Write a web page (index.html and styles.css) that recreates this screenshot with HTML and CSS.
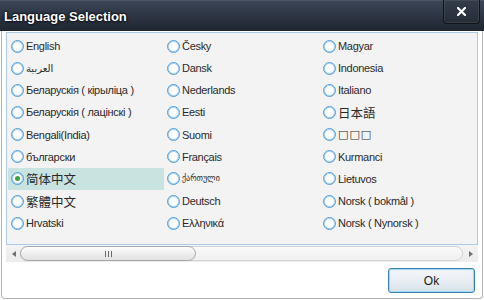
FILE: index.html
```html
<!DOCTYPE html>
<html lang="en">
<head>
  <meta charset="UTF-8">
  <title>Language Selection</title>
  <link rel="stylesheet" href="styles.css">
</head>
<body>
  <div class="dialog">
    <div class="titlebar">
      <span class="title">Language Selection</span>
      <button class="close-button">
        <svg width="9" height="9" viewBox="0 0 9 9"><path d="M1 1L8 8M8 1L1 8" stroke="#fff" stroke-width="2.2" stroke-linecap="square"/></svg>
      </button>
    </div>
    <div class="content">
      <div class="list">
        <!-- column 1 -->
        <label class="item"><span class="radio"></span>English</label>
        <label class="item"><span class="radio"></span><span class="arabic">العربية</span></label>
        <label class="item"><span class="radio"></span>Беларускія ( кірыліца )</label>
        <label class="item"><span class="radio"></span>Беларускія ( лацінскі )</label>
        <label class="item"><span class="radio"></span>Bengali(India)</label>
        <label class="item"><span class="radio"></span>български</label>
        <label class="item selected"><span class="radio"></span><span class="cjk">简体中文</span></label>
        <label class="item"><span class="radio"></span><span class="cjk">繁體中文</span></label>
        <label class="item"><span class="radio"></span>Hrvatski</label>
        <!-- column 2 -->
        <label class="item"><span class="radio"></span>Česky</label>
        <label class="item"><span class="radio"></span>Dansk</label>
        <label class="item"><span class="radio"></span>Nederlands</label>
        <label class="item"><span class="radio"></span>Eesti</label>
        <label class="item"><span class="radio"></span>Suomi</label>
        <label class="item"><span class="radio"></span>Français</label>
        <label class="item"><span class="radio"></span><span class="georgian">ქართული</span></label>
        <label class="item"><span class="radio"></span>Deutsch</label>
        <label class="item"><span class="radio"></span>Ελληνικά</label>
        <!-- column 3 -->
        <label class="item"><span class="radio"></span>Magyar</label>
        <label class="item"><span class="radio"></span>Indonesia</label>
        <label class="item"><span class="radio"></span>Italiano</label>
        <label class="item"><span class="radio"></span><span class="cjk">日本語</span></label>
        <label class="item"><span class="radio"></span><span class="boxes">□□□</span></label>
        <label class="item"><span class="radio"></span>Kurmanci</label>
        <label class="item"><span class="radio"></span>Lietuvos</label>
        <label class="item"><span class="radio"></span>Norsk ( bokmål )</label>
        <label class="item"><span class="radio"></span>Norsk ( Nynorsk )</label>
      </div>
      <div class="hscroll">
        <span class="arrow left"></span>
        <div class="track">
          <div class="thumb"><span class="grip"></span></div>
        </div>
        <span class="arrow right"></span>
      </div>
      <div class="footer">
        <button class="ok-button">Ok</button>
      </div>
    </div>
  </div>
</body>
</html>
```

FILE: styles.css
```css
body {
  margin: 0;
  background: #fff;
  font-family: "Liberation Sans", "DejaVu Sans", "Noto Sans CJK SC", sans-serif;
}
.dialog {
  width: 484px;
  height: 300px;
}
.titlebar {
  height: 31px;
  display: flex;
  justify-content: space-between;
  background: linear-gradient(#3b4555, #2a3240 60%, #1f2630);
  border-top: 1px solid #4a5464;
  box-sizing: border-box;
}
.title {
  padding: 8px 0 0 4px;
  font-size: 13px;
  font-weight: bold;
  color: #fff;
  text-shadow: 0 0 3px #000, 0 0 2px #000;
}
.close-button {
  width: 37px;
  height: 24px;
  margin: -1px 4px 0 0;
  padding: 0;
  display: flex;
  align-items: center;
  justify-content: center;
  background: linear-gradient(#333c4a, #262d38);
  border: 1px solid #10141a;
  border-top: none;
  border-radius: 0 0 4px 4px;
  box-shadow: inset 0 0 0 1px rgba(255, 255, 255, 0.08);
}
.content {
  margin: 0 1px;
  height: 268px;
  box-sizing: border-box;
  padding: 1px 4px 0;
  border: 1px solid #b4b4b4;
  border-top: none;
  border-radius: 0 0 4px 4px;
}
.list {
  height: 213px;
  box-sizing: border-box;
  padding: 2px 0 0 1px;
  border: 1px solid #aecbe6;
  background: #f3f3f3;
  display: grid;
  grid-template-columns: repeat(3, 156px);
  grid-template-rows: repeat(9, 22.15px);
  grid-auto-flow: column;
  font-size: 11px;
  letter-spacing: -0.3px;
  color: #2a2a2a;
}
.item {
  display: flex;
  align-items: center;
  padding-left: 3px;
  white-space: nowrap;
}
.item.selected {
  background: #c9e3e1;
}
.radio {
  width: 13px;
  height: 13px;
  box-sizing: border-box;
  margin-right: 2px;
  border: 1px solid #4f9cdb;
  border-radius: 50%;
  background: #fff;
  box-shadow: inset 0 0 0 1px #a9d0f0;
  display: flex;
  align-items: center;
  justify-content: center;
}
.item.selected .radio::after {
  content: "";
  width: 5px;
  height: 5px;
  border-radius: 50%;
  background: #3aa33a;
}
.cjk {
  font-family: "Noto Sans CJK SC", sans-serif;
  font-size: 12.5px;
  letter-spacing: 0;
}
.georgian {
  font-family: "DejaVu Sans", sans-serif;
  font-size: 8px;
  letter-spacing: 0;
}
.arabic {
  font-family: "DejaVu Sans", sans-serif;
  font-size: 10px;
  letter-spacing: 0;
}
.boxes {
  font-family: "DejaVu Sans", sans-serif;
  font-size: 11px;
  letter-spacing: 1px;
}
.hscroll {
  height: 17px;
  display: flex;
  align-items: center;
  background: linear-gradient(#f3f3f3, #ececec);
}
.arrow {
  width: 0;
  height: 0;
  border-top: 3.5px solid transparent;
  border-bottom: 3.5px solid transparent;
}
.arrow.left {
  margin: 0 4px 0 6px;
  border-right: 4px solid #707070;
}
.arrow.right {
  margin: 0 5px 0 6px;
  border-left: 4px solid #707070;
}
.track {
  flex: 1;
  height: 15px;
  box-sizing: border-box;
  border: 1px solid #d2d2d2;
  border-radius: 8px;
  background: linear-gradient(#fafafa, #f0f0f0);
  display: flex;
}
.thumb {
  width: 176px;
  margin: -1px 0 0 -1px;
  height: 15px;
  box-sizing: border-box;
  border: 1px solid #a8a8a8;
  border-radius: 8px;
  background: linear-gradient(#ffffff, #eeeeee 50%, #e2e2e2);
  display: flex;
  align-items: center;
  justify-content: center;
}
.grip {
  width: 7px;
  height: 6px;
  background: repeating-linear-gradient(90deg, #6a6a6a 0, #6a6a6a 1px, transparent 1px, transparent 3px);
}
.footer {
  display: flex;
  justify-content: flex-end;
  padding: 6px 3px 0 0;
}
.ok-button {
  width: 87px;
  height: 25px;
  padding: 0;
  font-family: "Liberation Sans", sans-serif;
  font-size: 12px;
  color: #222;
  border: 1px solid #3c7fb1;
  border-radius: 3px;
  background: linear-gradient(#f4f7fa, #e9eef3 50%, #d8e2ea);
  box-shadow: inset 0 0 0 1px #a6d8f5, inset 0 0 2px 1px #c8e8fa;
}
```
